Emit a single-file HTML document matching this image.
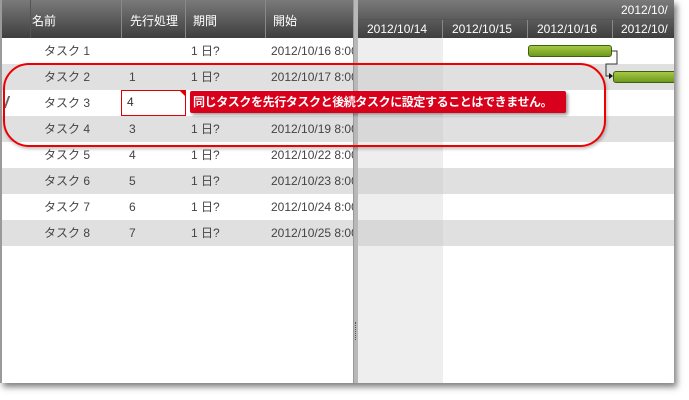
<!DOCTYPE html>
<html><head><meta charset="utf-8"><style>
*{margin:0;padding:0;box-sizing:border-box}
body{width:689px;height:400px;background:#fff;position:relative;overflow:hidden;font-family:"Liberation Sans","Noto Sans CJK JP",sans-serif;font-size:12px;color:#444}
#c{position:absolute;left:0;top:0;width:674px;height:383px;background:#fff;border-left:2px solid #9a9a9a;box-shadow:3px 4px 6px rgba(0,0,0,.5);overflow:hidden}
.hd{position:absolute;top:0;height:38px;background:linear-gradient(#7a7a7a,#3e3e3e);color:#fff}
.a{position:absolute;white-space:nowrap}
.row{position:absolute;left:0;width:674px;height:26px}
.g{background:#e0e0e0}
.t{position:absolute;line-height:26px;white-space:nowrap;overflow:hidden}
</style></head><body>
<div id="c">
<div class="hd" style="left:0;width:353px"></div>
<div class="a" style="left:28px;top:0;width:1px;height:38px;background:#555"></div>
<div class="a" style="left:119px;top:0;width:1px;height:38px;background:#888"></div>
<div class="a" style="left:183px;top:0;width:1px;height:38px;background:#888"></div>
<div class="a" style="left:263px;top:0;width:1px;height:38px;background:#888"></div>
<div class="a" style="left:30px;top:12px;color:#fff">名前</div>
<div class="a" style="left:128px;top:12px;color:#fff">先行処理</div>
<div class="a" style="left:191px;top:12px;color:#fff">期間</div>
<div class="a" style="left:271px;top:12px;color:#fff">開始</div>
<div class="hd" style="left:356px;width:320px"></div>
<div class="a" style="left:356px;top:19px;width:320px;height:1px;background:#555"></div>
<div class="a" style="left:440px;top:20px;width:1px;height:18px;background:#888"></div>
<div class="a" style="left:525px;top:20px;width:1px;height:18px;background:#888"></div>
<div class="a" style="left:610px;top:20px;width:1px;height:18px;background:#888"></div>
<div class="a" style="left:619px;top:3px;color:#fff">2012/10/</div>
<div class="a" style="left:365px;top:22px;color:#fff">2012/10/14</div>
<div class="a" style="left:450px;top:22px;color:#fff">2012/10/15</div>
<div class="a" style="left:535px;top:22px;color:#fff">2012/10/16</div>
<div class="a" style="left:619px;top:22px;color:#fff">2012/10/</div>

<div class="row" style="top:38px"><span class="t" style="left:42px">タスク 1</span><span class="t" style="left:189px">1 日?</span><span class="t" style="left:269px;width:82px">2012/10/16 8:00</span></div>
<div class="row g" style="top:64px"><span class="t" style="left:42px">タスク 2</span><span class="t" style="left:127px">1</span><span class="t" style="left:189px">1 日?</span><span class="t" style="left:269px;width:82px">2012/10/17 8:00</span></div>
<div class="row" style="top:90px"><span class="t" style="left:42px">タスク 3</span></div>
<div class="row g" style="top:116px"><span class="t" style="left:42px">タスク 4</span><span class="t" style="left:127px">3</span><span class="t" style="left:189px">1 日?</span><span class="t" style="left:269px;width:82px">2012/10/19 8:00</span></div>
<div class="row" style="top:142px"><span class="t" style="left:42px">タスク 5</span><span class="t" style="left:127px">4</span><span class="t" style="left:189px">1 日?</span><span class="t" style="left:269px;width:82px">2012/10/22 8:00</span></div>
<div class="row g" style="top:168px"><span class="t" style="left:42px">タスク 6</span><span class="t" style="left:127px">5</span><span class="t" style="left:189px">1 日?</span><span class="t" style="left:269px;width:82px">2012/10/23 8:00</span></div>
<div class="row" style="top:194px"><span class="t" style="left:42px">タスク 7</span><span class="t" style="left:127px">6</span><span class="t" style="left:189px">1 日?</span><span class="t" style="left:269px;width:82px">2012/10/24 8:00</span></div>
<div class="row g" style="top:220px"><span class="t" style="left:42px">タスク 8</span><span class="t" style="left:127px">7</span><span class="t" style="left:189px">1 日?</span><span class="t" style="left:269px;width:82px">2012/10/25 8:00</span></div>

<div class="a" style="left:356px;top:38px;width:85px;height:345px;background:rgba(200,200,200,.3)"></div>
<div class="a" style="left:351px;top:0;width:5px;height:383px;background:#b8b8b8;border-left:1px solid #999"></div>
<div class="a" style="left:353px;top:322px;width:1px;height:18px;border-left:1px dotted #555"></div>
<div class="a" style="left:4px;top:96px;width:2px;height:12px;background:#666;transform:skew(-20deg)"></div>

<div class="a" style="left:119px;top:90px;width:65px;height:26px;border:1px solid #d00;background:#fff;padding:4px 5px;font-size:12px;color:#333">4</div>
<div class="a" style="left:177px;top:90px;width:0;height:0;border-top:7px solid #d00;border-left:7px solid transparent"></div>
<div class="a" style="left:188px;top:91px;width:376px;height:22px;background:#d8001a;color:#fff;font-weight:bold;font-size:12px;letter-spacing:-0.4px;line-height:22px;padding-left:3px;border-radius:2px;box-shadow:2px 2px 3px rgba(0,0,0,.4);overflow:hidden">同じタスクを先行タスクと後続タスクに設定することはできません。</div>

<div class="a" style="left:1px;top:63px;width:603px;height:84px;border:2px solid #e00;border-radius:26px;box-shadow:1px 2px 3px rgba(0,0,0,.25)"></div>

<div class="a" style="left:526px;top:45px;width:84px;height:12px;border:1px solid #3d5f10;border-radius:3px;background:linear-gradient(#a6c842,#6f9a1e)"></div>
<div class="a" style="left:611px;top:71px;width:70px;height:12px;border:1px solid #3d5f10;border-radius:3px;background:linear-gradient(#a6c842,#6f9a1e)"></div>
<svg class="a" style="left:598px;top:48px" width="20" height="34"><path d="M12 3 H17 V16 H6 V28 H12" fill="none" stroke="#333" stroke-width="1"/><path d="M9 25 L13 28 L9 31Z" fill="#111"/></svg>
</div>
</body></html>
